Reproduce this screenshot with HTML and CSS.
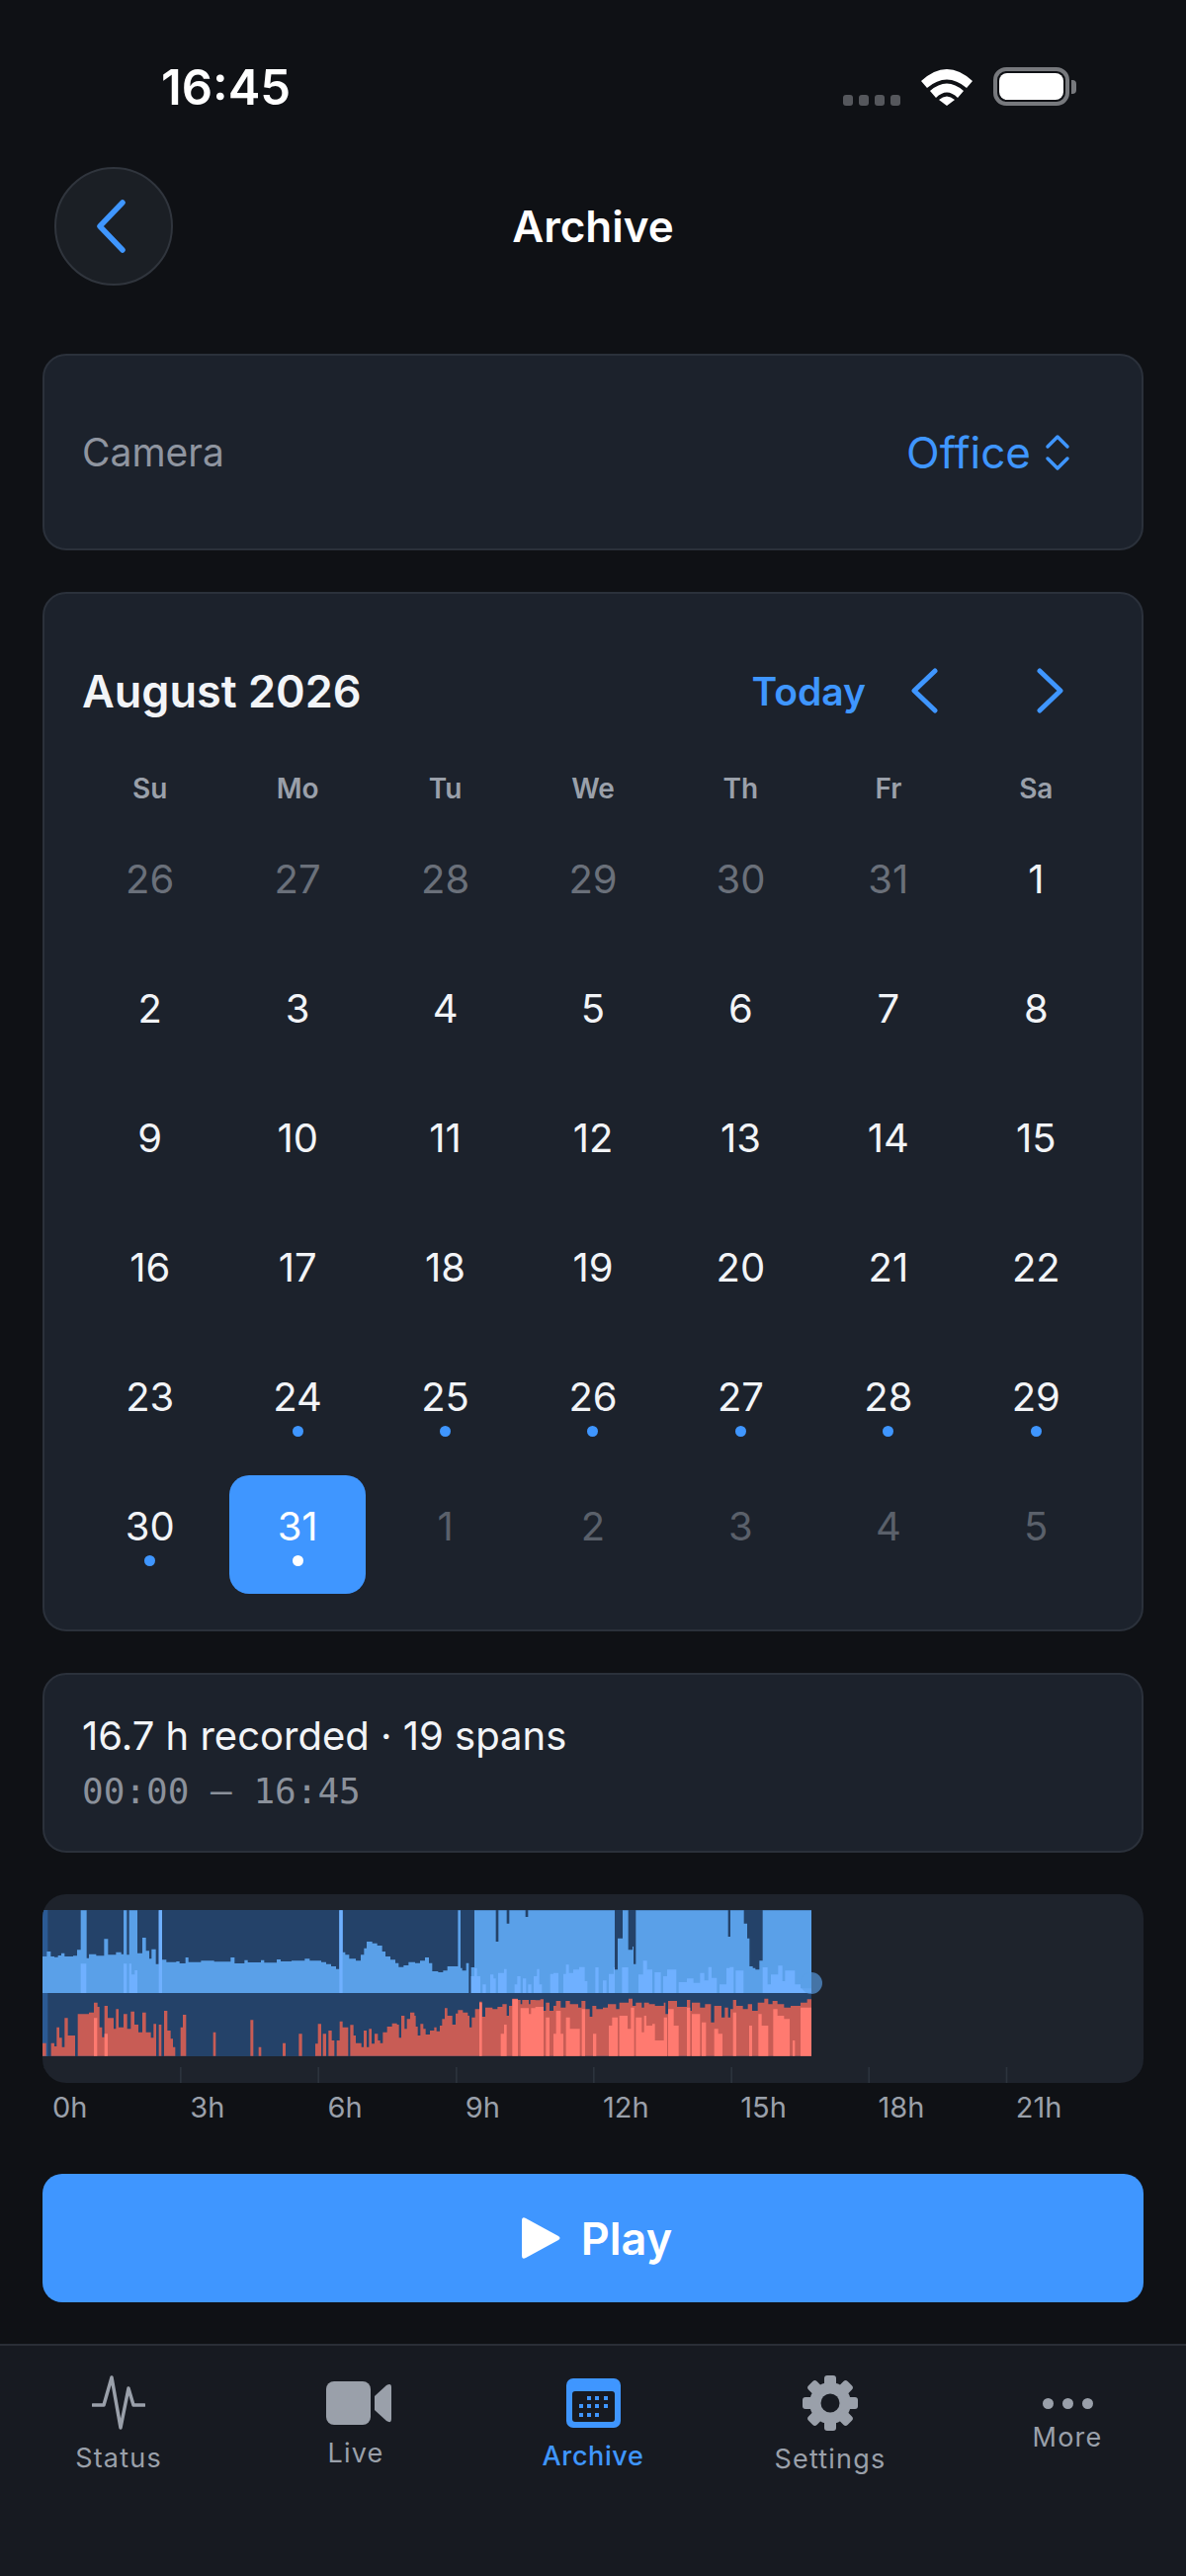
FILE: index.html
```html
<!DOCTYPE html>
<html lang="en">
<head>
    <meta charset="UTF-8">
    <meta name="viewport" content="width=device-width, initial-scale=1.0">
    <title>Archive</title>
    <link rel="stylesheet" href="styles.css">
</head>
<body>
    <!-- Status bar -->
    <div class="status-bar">
        <span class="clock">16:45</span>
        <div class="status-icons">
            <div class="signal"><i></i><i></i><i></i><i></i></div>
            <svg class="wifi" viewBox="0 0 52 39">
                <path d="M0 14 Q26 -10 52 14 L46 21 Q26 4 6 21 Z"/>
                <path d="M9 24 Q26 9 43 24 L37 31 Q26 20 15 31 Z"/>
                <path d="M18 33 Q26 26 34 33 L26 39 Z"/>
            </svg>
            <div class="battery"><div class="battery-fill"></div></div>
            <div class="battery-nub"></div>
        </div>
    </div>

    <!-- Header -->
    <header class="top-bar">
        <button class="back-button">
            <svg viewBox="0 0 34 56"><path d="M29 4 L6 28 L29 52"/></svg>
        </button>
        <h1>Archive</h1>
    </header>

    <main class="content">
        <!-- Camera picker -->
        <section class="card camera-row">
            <span class="camera-label">Camera</span>
            <span class="camera-value">
                Office
                <svg viewBox="0 0 26 38"><path d="M3 13 L13 3 L23 13 M3 25 L13 35 L23 25"/></svg>
            </span>
        </section>

        <!-- Calendar -->
        <section class="card calendar">
            <div class="calendar-head">
                <h2>August 2026</h2>
                <div class="calendar-nav">
                    <span class="today">Today</span>
                    <svg class="nav-chevron" viewBox="0 0 30 46"><path d="M26 3 L5 23 L26 43"/></svg>
                    <svg class="nav-chevron next" viewBox="0 0 30 46"><path d="M4 3 L25 23 L4 43"/></svg>
                </div>
            </div>
            <div class="weekdays">
                <span>Su</span><span>Mo</span><span>Tu</span><span>We</span><span>Th</span><span>Fr</span><span>Sa</span>
            </div>
            <div class="days">
                <div class="day muted">26</div>
                <div class="day muted">27</div>
                <div class="day muted">28</div>
                <div class="day muted">29</div>
                <div class="day muted">30</div>
                <div class="day muted">31</div>
                <div class="day">1</div>
                <div class="day">2</div>
                <div class="day">3</div>
                <div class="day">4</div>
                <div class="day">5</div>
                <div class="day">6</div>
                <div class="day">7</div>
                <div class="day">8</div>
                <div class="day">9</div>
                <div class="day">10</div>
                <div class="day">11</div>
                <div class="day">12</div>
                <div class="day">13</div>
                <div class="day">14</div>
                <div class="day">15</div>
                <div class="day">16</div>
                <div class="day">17</div>
                <div class="day">18</div>
                <div class="day">19</div>
                <div class="day">20</div>
                <div class="day">21</div>
                <div class="day">22</div>
                <div class="day">23</div>
                <div class="day">24<i class="dot"></i></div>
                <div class="day">25<i class="dot"></i></div>
                <div class="day">26<i class="dot"></i></div>
                <div class="day">27<i class="dot"></i></div>
                <div class="day">28<i class="dot"></i></div>
                <div class="day">29<i class="dot"></i></div>
                <div class="day">30<i class="dot"></i></div>
                <div class="day selected">31<i class="dot"></i></div>
                <div class="day faded">1</div>
                <div class="day faded">2</div>
                <div class="day faded">3</div>
                <div class="day faded">4</div>
                <div class="day faded">5</div>
            </div>
        </section>

        <!-- Recording summary -->
        <section class="card summary">
            <div class="summary-title">16.7 h recorded · 19 spans</div>
            <div class="summary-range">00:00 — 16:45</div>
        </section>

        <!-- Day timeline: motion on top, audio below, 3 units per px -->
        <div class="timeline">
            <svg viewBox="0 0 3342 573">
                <rect x="0" y="48" width="2334" height="444" fill="#244269"/>
                <rect x="0" y="48" width="16" height="444" fill="#2b5a94"/>

                <g transform="translate(-9 24)">
                    <path class="motion" d="M9 276 V165 H22 V150 H34 V165 H45 V167 H56 V162 H66 V155 H76 V165 H102 V163 H114 V145 H125 V25 H143 V170 H150 V158 H172 V163 H196 V112 H208 V160 H232 V152 H248 V158 H255 V25 H265 V160 H272 V25 H297 V155 H312 V108 H323 V148 H333 V172 H340 V143 H353 V188 H362 V25 H372 V175 H385 V182 H415 V180 H425 V186 H443 V168 H452 V182 H490 V178 H530 V181 H580 V168 H592 V186 H622 V176 H632 V183 H672 V176 H682 V184 H720 V174 H732 V180 H765 V178 H780 V276 Z"/>
                    <path class="motion-peak" d="M125 276 V187 H142 V276 Z M255 276 V187 H265 V276 Z M272 276 V187 H279 V220 H289 V207 H297 V276 Z M362 276 V25 H372 V276 Z"/>
                    <path class="audio" d="M9 467 V428 H20 V467 H35 V428 H45 V438 H52 V380 H60 V412 H68 V440 H76 V352 H86 V405 H108 V467 H116 V340 H150 V335 H165 V305 H176 V318 H182 V380 H190 V410 H197 V315 H207 V352 H225 V385 H232 V325 H240 V380 H255 V340 H266 V385 H277 V332 H288 V372 H300 V395 H312 V335 H323 V395 H338 V412 H346 V370 H354 V467 H362 V372 H370 V467 H378 V330 H388 V390 H398 V415 H405 V440 H412 V467 H428 V380 H435 V342 H445 V467 Z M527 467 V395 H535 V467 Z M640 467 V358 H649 V467 Z M665 467 V440 H673 V467 Z M738 467 V428 H747 V467 Z"/>
                    <path class="audio-peak" d="M165 467 V352 H175 V467 Z M197 467 V400 H207 V467 Z"/>
                </g>

                <g transform="translate(771 24)">
                    <path class="motion" d="M0 276 V178 H25 V172 H40 V178 H75 V182 H90 V188 H105 V195 H120 V203 H130 V25 H140 V152 H148 V160 H160 V172 H180 V178 H195 V160 H205 V140 H213 V120 H230 V125 H245 V132 H260 V150 H270 V165 H285 V175 H300 V185 H310 V197 H325 V192 H340 V182 H360 V185 H375 V178 H390 V168 H402 V185 H412 V210 H430 V213 H445 V208 H458 V195 H490 V25 H498 V200 H503 V208 H515 V185 H523 V276 Z M530 276 V198 H540 V25 H605 V120 H613 V25 H638 V65 H646 V25 H695 V45 H703 V25 H780 V276 Z"/>
                    <path class="motion-peak" d="M130 276 V25 H140 V276 Z M530 276 V225 H540 V200 H548 V225 H558 V276 Z M565 276 V250 H575 V276 Z M588 276 V220 H598 V232 H605 V276 Z M612 276 V215 H630 V203 H638 V276 Z M662 276 V250 H670 V225 H680 V276 Z M687 276 V232 H697 V276 Z M703 276 V250 H713 V276 Z M720 276 V225 H730 V203 H737 V250 H745 V276 Z M770 276 V218 H780 V276 Z"/>
                    <path class="audio" d="M7 467 V400 H17 V467 Z M57 467 V430 H65 V370 H75 V467 H80 V400 H90 V467 H97 V390 H107 V420 H115 V467 H122 V420 H131 V362 H140 V380 H157 V467 H163 V373 H173 V405 H180 V428 H197 V440 H204 V390 H213 V440 H220 V385 H228 V430 H237 V400 H247 V420 H254 V428 H262 V395 H275 V378 H290 V368 H305 V372 H311 V412 H318 V345 H328 V385 H335 V355 H345 V335 H358 V345 H362 V378 H368 V405 H376 V370 H385 V385 H392 V402 H405 V390 H418 V380 H425 V392 H435 V375 H442 V355 H450 V322 H458 V345 H473 V372 H483 V338 H490 V328 H505 V335 H520 V345 H525 V380 H532 V350 H542 V325 H555 V302 H563 V348 H573 V320 H595 V325 H610 V318 H625 V310 H638 V345 H645 V315 H655 V293 H672 V297 H680 V310 H685 V297 H705 V310 H710 V297 H725 V298 H740 V295 H750 V330 H757 V305 H768 V330 H780 V467 Z"/>
                    <path class="audio-peak" d="M555 467 V305 H563 V467 Z M620 467 V400 H630 V372 H638 V467 Z M655 467 V295 H672 V467 Z M680 467 V322 H705 V340 H712 V322 H725 V318 H750 V467 Z M757 467 V350 H768 V467 Z"/>
                </g>

                <g transform="translate(1551 24)">
                    <path class="motion" d="M0 276 V25 H186 V205 H195 V110 H210 V25 H227 V145 H240 V135 H243 V188 H250 V25 H530 V105 H537 V25 H578 V65 H588 V110 H595 V195 H605 V200 H613 V205 H625 V178 H635 V25 H783 V276 Z"/>
                    <path class="motion-peak" d="M0 276 V215 H15 V276 Z M30 276 V218 H38 V190 H47 V215 H60 V205 H78 V197 H95 V240 H103 V276 Z M127 276 V198 H137 V276 Z M150 276 V238 H161 V276 Z M168 276 V218 H183 V198 H186 V276 Z M208 276 V198 H227 V276 Z M258 276 V220 H272 V178 H284 V205 H300 V276 Z M307 276 V213 H326 V276 Z M333 276 V225 H345 V205 H373 V276 Z M380 276 V243 H405 V232 H425 V245 H445 V215 H458 V238 H470 V197 H480 V230 H496 V276 Z M504 276 V250 H525 V200 H535 V197 H547 V276 Z M553 276 V208 H577 V276 Z M635 276 V198 H650 V250 H660 V220 H682 V193 H695 V240 H703 V208 H733 V250 H750 V262 H783 V276 Z"/>
                    <path class="audio" d="M0 467 V315 H8 V300 H22 V320 H37 V300 H50 V310 H75 V320 H85 V300 H97 V325 H110 V348 H118 V315 H130 V325 H150 V320 H165 V310 H190 V325 H200 V305 H228 V293 H240 V315 H250 V305 H268 V320 H275 V305 H290 V310 H308 V315 H335 V305 H340 V340 H348 V300 H375 V318 H405 V297 H415 V330 H420 V305 H445 V320 H460 V310 H478 V365 H488 V315 H510 V350 H520 V320 H530 V350 H537 V325 H545 V297 H555 V315 H575 V325 H590 V310 H603 V330 H620 V305 H640 V293 H652 V310 H665 V300 H680 V310 H700 V320 H720 V315 H750 V305 H770 V295 H783 V467 Z"/>
                    <path class="audio-peak" d="M0 467 V400 H8 V330 H22 V400 H30 V467 Z M38 467 V350 H50 V385 H80 V467 Z M86 467 V325 H96 V467 Z M120 467 V400 H130 V467 Z M168 467 V375 H178 V350 H195 V467 Z M200 467 V345 H225 V385 H235 V320 H245 V467 Z M250 467 V350 H268 V395 H275 V345 H282 V375 H300 V370 H308 V420 H335 V350 H345 V467 Z M348 467 V325 H365 V375 H380 V467 Z M405 467 V320 H415 V467 Z M420 467 V340 H445 V467 Z M450 467 V365 H463 V467 Z M488 467 V385 H500 V400 H513 V467 Z M545 467 V335 H555 V467 Z M594 467 V375 H603 V467 Z M622 467 V340 H632 V375 H652 V467 Z M667 467 V325 H680 V345 H700 V355 H717 V467 Z M726 467 V420 H733 V467 Z M750 467 V320 H783 V467 Z"/>
                </g>

                <g class="ticks">
                    <rect x="0" y="525" width="5" height="48"/>
                    <rect x="417" y="525" width="5" height="48"/>
                    <rect x="835" y="525" width="5" height="48"/>
                    <rect x="1254" y="525" width="5" height="48"/>
                    <rect x="1671" y="525" width="5" height="48"/>
                    <rect x="2089" y="525" width="5" height="48"/>
                    <rect x="2506" y="525" width="5" height="48"/>
                    <rect x="2924" y="525" width="5" height="48"/>
                </g>
                <circle class="knob" cx="2334" cy="270" r="33"/>
            </svg>
        </div>
        <div class="hours">
            <span>0h</span><span>3h</span><span>6h</span><span>9h</span><span>12h</span><span>15h</span><span>18h</span><span>21h</span>
        </div>

        <button class="play-button">
            <svg viewBox="0 0 40 50"><path d="M4 5 L37 23 Q40 25 37 27 L4 45 Q0 47 0 43 V7 Q0 3 4 5 Z"/></svg>
            Play
        </button>
    </main>

    <!-- Bottom tabs -->
    <nav class="tab-bar">
        <div class="tab tab-status">
            <svg viewBox="0 0 54 55"><path d="M1 30 H12 L20 2 L29 53 L37 13 L42 30 H53"/></svg>
            <span>Status</span>
        </div>
        <div class="tab tab-live">
            <svg viewBox="0 0 66 44">
                <rect x="0" y="0" width="45" height="44" rx="8"/>
                <path d="M49 15 L61 4 Q66 1 66 6 V38 Q66 43 61 40 L49 29 Z"/>
            </svg>
            <span>Live</span>
        </div>
        <div class="tab tab-archive active">
            <svg viewBox="0 0 55 50">
                <rect x="0" y="0" width="55" height="50" rx="7" fill="#3f96ff"/>
                <rect x="6" y="13" width="43" height="31" rx="3" fill="#171a21"/>
                <g fill="#3f96ff">
                    <rect x="21" y="18" width="4" height="4"/><rect x="29" y="18" width="4" height="4"/><rect x="38" y="18" width="4" height="4"/>
                    <rect x="13" y="26" width="4" height="4"/><rect x="21" y="26" width="4" height="4"/><rect x="29" y="26" width="4" height="4"/><rect x="38" y="26" width="4" height="4"/>
                    <rect x="13" y="35" width="4" height="4"/><rect x="21" y="35" width="4" height="4"/><rect x="29" y="35" width="4" height="4"/>
                </g>
            </svg>
            <span>Archive</span>
        </div>
        <div class="tab tab-settings">
            <svg viewBox="-28 -28 56 56">
                <circle r="21"/>
                <rect x="-6" y="-28" width="12" height="14" rx="3"/>
                <rect x="-6" y="-28" width="12" height="14" rx="3" transform="rotate(45)"/>
                <rect x="-6" y="-28" width="12" height="14" rx="3" transform="rotate(90)"/>
                <rect x="-6" y="-28" width="12" height="14" rx="3" transform="rotate(135)"/>
                <rect x="-6" y="-28" width="12" height="14" rx="3" transform="rotate(180)"/>
                <rect x="-6" y="-28" width="12" height="14" rx="3" transform="rotate(225)"/>
                <rect x="-6" y="-28" width="12" height="14" rx="3" transform="rotate(270)"/>
                <rect x="-6" y="-28" width="12" height="14" rx="3" transform="rotate(315)"/>
                <circle class="gear-hole" r="9.5"/>
            </svg>
            <span>Settings</span>
        </div>
        <div class="tab tab-more">
            <svg viewBox="0 0 51 11">
                <circle cx="5.5" cy="5.5" r="5.5"/><circle cx="25.5" cy="5.5" r="5.5"/><circle cx="45.5" cy="5.5" r="5.5"/>
            </svg>
            <span>More</span>
        </div>
    </nav>
</body>
</html>
```

FILE: styles.css
```css
/* General Styles */
* {
    box-sizing: border-box;
}

body {
    font-family: Inter, "Noto Sans", sans-serif;
    margin: 0;
    height: 2607px;
    overflow: hidden;
    display: flex;
    flex-direction: column;
    background-color: #0f1115;
    color: #f2f4f7;
}

button {
    font-family: inherit;
    border: none;
    cursor: pointer;
}

/* Status bar */
.status-bar {
    height: 140px;
    padding: 60px 111px 0 163px;
    display: flex;
    justify-content: space-between;
    align-items: flex-start;
}

.clock {
    font-size: 49px;
    font-weight: 600;
    line-height: 58px;
    color: #fff;
}

.status-icons {
    display: flex;
    align-items: center;
    height: 39px;
    margin-top: 8px;
}

.signal {
    display: flex;
    gap: 6px;
    margin: 27px 21px 0 0;
}

.signal i {
    width: 10px;
    height: 11px;
    border-radius: 3px;
    background-color: #55575c;
}

.wifi {
    width: 52px;
    height: 39px;
    fill: #fff;
    margin-right: 21px;
}

.battery {
    width: 77px;
    height: 39px;
    border: 4px solid #77797d;
    border-radius: 13px;
    padding: 2px;
}

.battery-fill {
    height: 100%;
    border-radius: 8px;
    background-color: #fff;
}

.battery-nub {
    width: 5px;
    height: 14px;
    margin-left: 2px;
    border-radius: 0 4px 4px 0;
    background-color: #77797d;
}

/* Header */
.top-bar {
    margin: 29px 55px 0;
    height: 120px;
    display: grid;
    grid-template-columns: 120px 1fr 120px;
    align-items: center;
}

.top-bar h1 {
    margin: 0;
    font-size: 44px;
    font-weight: 600;
    text-align: center;
    color: #fff;
}

.back-button {
    width: 120px;
    height: 120px;
    padding: 0 6px 0 0;
    border-radius: 50%;
    border: 2px solid #30353d;
    background-color: #1b1f25;
    display: flex;
    align-items: center;
    justify-content: center;
}

.back-button svg {
    width: 34px;
    height: 56px;
    fill: none;
    stroke: #3f96ff;
    stroke-width: 5.5;
    stroke-linecap: round;
    stroke-linejoin: round;
}

/* Cards */
.content {
    flex: 1;
    padding: 69px 43px 0;
    display: flex;
    flex-direction: column;
}

.card {
    background-color: #1c222c;
    border: 2px solid #2b313b;
    border-radius: 24px;
    margin-bottom: 42px;
}

.camera-row {
    height: 199px;
    padding: 0 38px;
    display: flex;
    justify-content: space-between;
    align-items: center;
}

.camera-label {
    font-size: 39px;
    color: #8f95a0;
}

.camera-value {
    font-size: 44px;
    color: #3f96ff;
    display: flex;
    align-items: center;
    gap: 14px;
    margin-right: 34px;
}

.camera-value svg {
    width: 26px;
    height: 38px;
    fill: none;
    stroke: #3f96ff;
    stroke-width: 3.5;
    stroke-linecap: round;
    stroke-linejoin: round;
}

/* Calendar */
.calendar {
    height: 1052px;
    padding: 40px 38px 0;
}

.calendar-head {
    height: 116px;
    display: flex;
    justify-content: space-between;
    align-items: center;
}

.calendar-head h2 {
    margin: 0;
    font-size: 45px;
    font-weight: 600;
}

.calendar-nav {
    display: flex;
    align-items: center;
    margin-right: 39px;
}

.today {
    font-size: 39px;
    font-weight: 600;
    color: #3f96ff;
    margin-right: 44px;
}

.nav-chevron {
    width: 30px;
    height: 46px;
    fill: none;
    stroke: #3f96ff;
    stroke-width: 5;
    stroke-linecap: round;
    stroke-linejoin: round;
}

.nav-chevron.next {
    margin-left: 98px;
}

.weekdays,
.days {
    display: grid;
    grid-template-columns: repeat(7, 1fr);
    column-gap: 12px;
    text-align: center;
}

.weekdays {
    height: 32px;
    margin: 25px 0 24px;
    font-size: 28px;
    font-weight: 600;
    line-height: 32px;
    color: #9aa0aa;
}

.days {
    grid-auto-rows: 120px;
    row-gap: 11px;
}

.day {
    padding-top: 28px;
    display: flex;
    flex-direction: column;
    align-items: center;
    font-size: 40px;
    line-height: 48px;
    border-radius: 20px;
}

.day .dot {
    width: 11px;
    height: 11px;
    margin-top: 5px;
    border-radius: 50%;
    background-color: #3f96ff;
}

.day.muted {
    color: #6a707a;
}

.day.faded {
    color: #5a606a;
}

.day.selected {
    background-color: #3f96ff;
    color: #fff;
}

.day.selected .dot {
    background-color: #fff;
}

/* Recording summary */
.summary {
    height: 182px;
    padding: 37px 38px 0;
}

.summary-title {
    font-size: 40px;
    line-height: 50px;
}

.summary-range {
    margin-top: 8px;
    font-family: "DejaVu Sans Mono", monospace;
    font-size: 36px;
    line-height: 46px;
    color: #8b919b;
}

/* Timeline */
.timeline {
    height: 191px;
    border-radius: 24px;
    overflow: hidden;
    background-color: #1e232c;
}

.timeline svg {
    display: block;
    width: 1114px;
    height: 191px;
}

.motion {
    fill: #5aa0e8;
}

.motion-peak {
    fill: #6fb0ff;
}

.audio {
    fill: #c85c55;
}

.audio-peak {
    fill: #ff7a70;
}

.ticks {
    fill: #2c333d;
}

.knob {
    fill: #5aa0e8;
    opacity: 0.65;
}

.hours {
    display: flex;
    margin-top: 4px;
}

.hours span {
    flex: 1;
    padding-left: 10px;
    font-size: 29px;
    line-height: 42px;
    color: #9aa0aa;
}

/* Play button */
.play-button {
    margin-top: 46px;
    height: 130px;
    padding-left: 14px;
    border-radius: 20px;
    background-color: #3f96ff;
    color: #fff;
    font-size: 45px;
    font-weight: 600;
    display: flex;
    align-items: center;
    justify-content: center;
    gap: 20px;
}

.play-button svg {
    width: 40px;
    height: 50px;
    fill: #fff;
}

/* Tab bar */
.tab-bar {
    height: 235px;
    background-color: #171a21;
    border-top: 2px solid #2a2e36;
    display: grid;
    grid-template-columns: repeat(5, 1fr);
}

.tab {
    display: flex;
    flex-direction: column;
    align-items: center;
    font-size: 27px;
    font-weight: 400;
    letter-spacing: 1.2px;
    line-height: 32px;
    color: #9aa0aa;
}

.tab svg {
    display: block;
    margin-bottom: 13px;
    fill: #9aa0aa;
}

.tab.active {
    color: #3f96ff;
    font-weight: 500;
    letter-spacing: 0.6px;
}

.tab-status svg {
    width: 54px;
    height: 55px;
    margin-top: 30px;
    fill: none;
    stroke: #9aa0aa;
    stroke-width: 3.5;
    stroke-linecap: round;
    stroke-linejoin: round;
}

.tab-live svg {
    width: 66px;
    height: 44px;
    margin: 36px 0 13px 6px;
}

.tab-archive svg {
    width: 55px;
    height: 50px;
    margin-top: 33px;
}

.tab-settings svg {
    width: 56px;
    height: 56px;
    margin-top: 30px;
}

.gear-hole {
    fill: #171a21;
}

.tab-more svg {
    width: 51px;
    height: 11px;
    margin-top: 53px;
}
```
